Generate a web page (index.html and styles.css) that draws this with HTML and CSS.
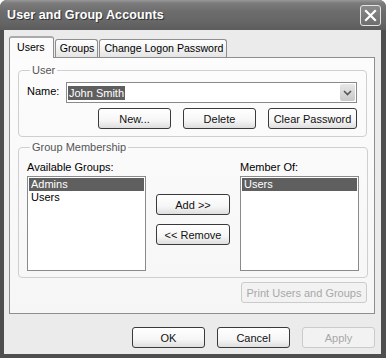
FILE: index.html
```html
<!DOCTYPE html>
<html lang="en">
<head>
  <meta charset="UTF-8" />
  <title>User and Group Accounts</title>
  <link rel="stylesheet" href="styles.css">
</head>
<body>
  <div class="window">
    <div class="titlebar">
      <span class="title">User and Group Accounts</span>
      <button class="close" aria-label="Close">
        <svg width="13" height="13" viewBox="0 0 13 13">
          <path d="M2 2 L11 11 M11 2 L2 11" stroke="#fff" stroke-width="2.2" stroke-linecap="square" />
        </svg>
      </button>
    </div>

    <div class="client">
      <div class="tabs">
        <div class="tab active">Users</div>
        <div class="tab">Groups</div>
        <div class="tab">Change Logon Password</div>
      </div>

      <div class="panel">
        <fieldset class="group user-group">
          <legend>User</legend>
          <div class="name-row">
            <label>Name:</label>
            <div class="combo">
              <span class="combo-text"><span class="sel">John Smith</span></span>
              <span class="combo-arrow">
                <svg width="9" height="6" viewBox="0 0 9 6">
                  <path d="M1 1 L4.5 4.5 L8 1" fill="none" stroke="#555" stroke-width="1.6" />
                </svg>
              </span>
            </div>
          </div>
          <div class="button-row">
            <button class="btn w-new">New...</button>
            <button class="btn w-delete">Delete</button>
            <button class="btn w-clear">Clear Password</button>
          </div>
        </fieldset>

        <fieldset class="group member-group">
          <legend>Group Membership</legend>
          <div class="member-grid">
            <label class="col-label">Available Groups:</label>
            <span></span>
            <label class="col-label">Member Of:</label>

            <ul class="listbox">
              <li class="selected">Admins</li>
              <li>Users</li>
            </ul>
            <div class="move-buttons">
              <button class="btn">Add &gt;&gt;</button>
              <button class="btn">&lt;&lt; Remove</button>
            </div>
            <ul class="listbox">
              <li class="selected">Users</li>
            </ul>
          </div>
        </fieldset>

        <div class="print-row">
          <button class="btn disabled w-print">Print Users and Groups</button>
        </div>
      </div>

      <div class="footer">
        <button class="btn">OK</button>
        <button class="btn">Cancel</button>
        <button class="btn disabled">Apply</button>
      </div>
    </div>
  </div>
</body>
</html>
```

FILE: styles.css
```css
body {
  margin: 0;
  background: #fff;
  font-family: "Liberation Sans", Arial, sans-serif;
  font-size: 10.6px;
  color: #000;
}
.window {
  width: 386px;
  height: 358px;
  display: flex;
  flex-direction: column;
  background: #4e4e4e;
  border-radius: 7px 7px 0 0;
  box-sizing: border-box;
  overflow: hidden;
}
.titlebar {
  height: 30px;
  display: flex;
  align-items: center;
  justify-content: space-between;
  padding: 0 5px 0 7px;
  background: linear-gradient(#999 0, #7c7c7c 3px, #6c6c6c 12px, #666 22px, #5c5c5c 30px);
}
.title {
  color: #fff;
  font-weight: bold;
  font-size: 12.5px;
  text-shadow: 1px 1px 0 #333;
  letter-spacing: 0.1px;
}
.close {
  width: 21px;
  height: 21px;
  padding: 0;
  display: flex;
  align-items: center;
  justify-content: center;
  border: 1px solid #e4e4e4;
  border-radius: 3px;
  background: linear-gradient(#8a8a8a, #6e6e6e);
}
.client {
  flex: 1;
  display: flex;
  flex-direction: column;
  margin: 0 5px 4px 4px;
  padding: 7px 6px 0 5px;
  background: #ebebeb;
}
.tabs {
  display: flex;
  align-items: flex-end;
  height: 20px;
  position: relative;
  z-index: 1;
}
.tab {
  height: 17px;
  line-height: 17px;
  padding: 0 3px 0 4px;
  margin-right: 1px;
  border: 1px solid #8e8e8e;
  border-bottom: none;
  border-radius: 3px 3px 0 0;
  background: linear-gradient(#fff, #f0f0f0 60%, #e4e4e4);
  font-size: 10.6px;
}
.tab.active {
  height: 20px;
  line-height: 18px;
  padding: 0 8px 0 7px;
  margin-bottom: -1px;
  border-top: 2px solid #aaa;
  background: #fbfbfb;
}
.panel {
  height: 257px;
  box-sizing: border-box;
  border: 1px solid #8e8e8e;
  background: linear-gradient(#fcfcfc, #f6f6f6);
  padding: 6px 7px 0 8px;
  display: flex;
  flex-direction: column;
}
.group {
  margin: 0;
  border: 1px solid #cfcfcf;
  border-radius: 4px;
  padding: 0 8px 6px 8px;
}
.group legend {
  padding: 0 2px;
  margin-left: 3px;
  color: #555;
  font-size: 11px;
  line-height: 13px;
}
.user-group {
  height: 73px;
  box-sizing: border-box;
  padding-top: 5px;
}
.name-row {
  display: flex;
  align-items: center;
  justify-content: space-between;
  padding-right: 1px;
}
.name-row label {
  font-size: 11px;
  margin-top: -3px;
}
.combo {
  width: 291px;
  height: 21px;
  box-sizing: border-box;
  border: 1px solid #8a8a8a;
  background: #fff;
  display: flex;
  align-items: center;
  justify-content: space-between;
  padding: 0 1px 0 1px;
}
.combo-text {
  font-size: 11px;
}
.sel {
  background: #5f5f5f;
  color: #fff;
  padding: 1px 1px;
}
.combo-arrow {
  width: 15px;
  height: 17px;
  border-radius: 2px;
  background: linear-gradient(#e8e8e8, #c8c8c8);
  display: flex;
  align-items: center;
  justify-content: center;
}
.button-row {
  display: flex;
  justify-content: flex-end;
  gap: 12px;
  margin-top: 5px;
  padding-right: 1px;
}
.btn {
  height: 21px;
  padding: 0;
  font-family: inherit;
  font-size: 11px;
  color: #111;
  border: 1px solid #3a3a3a;
  border-radius: 3px;
  background: linear-gradient(#fff, #f6f6f6 60%, #dedede);
  width: 73px;
}
.btn.disabled {
  border-color: #cbcbcb;
  color: #a8a8a8;
  background: #f2f2f2;
}
.w-clear {
  width: 89px;
}
.member-group {
  margin-top: 4px;
  height: 137px;
  box-sizing: border-box;
  padding-top: 7px;
}
.member-grid {
  display: grid;
  grid-template-columns: 119px 74px 119px;
  grid-template-rows: 15px 95px;
  column-gap: 10px;
  align-items: start;
}
.col-label {
  font-size: 11px;
}
.listbox {
  list-style: none;
  margin: 0;
  height: 95px;
  box-sizing: border-box;
  border: 1px solid #8a8a8a;
  background: #fff;
  padding: 1px;
}
.listbox li {
  height: 13px;
  line-height: 13px;
  padding-left: 2px;
  font-size: 11px;
}
.listbox li.selected {
  background: #5f5f5f;
  color: #fff;
}
.move-buttons {
  display: flex;
  flex-direction: column;
  gap: 9px;
  margin-top: 18px;
}
.move-buttons .btn {
  width: 74px;
}
.print-row {
  display: flex;
  justify-content: flex-end;
  margin-top: 4px;
}
.w-print {
  width: 126px;
}
.footer {
  display: flex;
  justify-content: flex-end;
  gap: 12px;
  margin-top: 13px;
}
.footer .btn {
  width: 73px;
}
```
